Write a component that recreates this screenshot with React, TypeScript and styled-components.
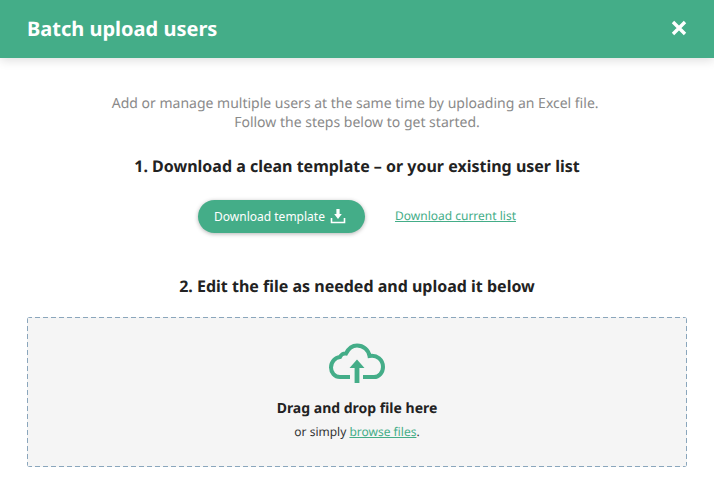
import styled, { createGlobalStyle } from 'styled-components';

const GlobalStyle = createGlobalStyle`
  html, body {
    margin: 0;
    padding: 0;
    background: #fff;
    font-family: "Noto Sans", sans-serif;
    text-rendering: geometricPrecision;
  }
`;

const Page = styled.div`
  width: 714px;
  height: 494px;
  overflow: hidden;
  background: #fff;
`;

const Header = styled.header`
  height: 58px;
  padding: 0 27px 2px;
  box-sizing: border-box;
  display: flex;
  align-items: center;
  justify-content: space-between;
  background: #44ad88;
  box-shadow: 0 2px 10px rgba(0, 0, 0, 0.14);
`;

const Title = styled.h1`
  margin: 0;
  font-size: 20px;
  line-height: 27px;
  font-weight: 700;
  color: #fff;
`;

const CloseButton = styled.button`
  display: flex;
  padding: 0;
  border: 0;
  background: none;
`;

const Body = styled.main`
  padding: 36px 27px 0;
  display: flex;
  flex-direction: column;
  align-items: center;
`;

const Intro = styled.p`
  margin: 0;
  font-size: 14px;
  line-height: 19px;
  text-align: center;
  color: #8a8a8a;
`;

const StepTitle = styled.h2<{ $top: number }>`
  margin: ${(p) => p.$top}px 0 0;
  font-size: 16px;
  line-height: 22px;
  font-weight: 700;
  color: #222;
`;

const Actions = styled.div`
  margin-top: 23px;
  display: flex;
  align-items: center;
  gap: 30px;
`;

const PrimaryButton = styled.button`
  width: 167px;
  height: 33px;
  padding: 0 3px 0 0;
  border: 0;
  border-radius: 17px;
  display: flex;
  align-items: center;
  justify-content: center;
  gap: 5px;
  background: #44ad88;
  box-shadow: 0 1px 4px rgba(0, 0, 0, 0.3);
  color: #fff;
  font-family: inherit;
  font-size: 12px;
`;

const TextLink = styled.a`
  color: #44ad88;
  text-decoration: underline;
  cursor: pointer;
`;

const CurrentListLink = styled(TextLink)`
  font-size: 12px;
  line-height: 16px;
  margin-top: -1px;
`;

const DropZone = styled.section`
  margin-top: 20px;
  width: 660px;
  height: 150px;
  box-sizing: border-box;
  border-radius: 3px;
  background-color: #f5f5f5;
  background-image:
    repeating-linear-gradient(90deg, #8aa6bc 0 5px, transparent 5px 8px),
    repeating-linear-gradient(90deg, #8aa6bc 0 5px, transparent 5px 8px),
    repeating-linear-gradient(0deg, #8aa6bc 0 5px, transparent 5px 8px),
    repeating-linear-gradient(0deg, #8aa6bc 0 5px, transparent 5px 8px);
  background-size: 100% 1px, 100% 1px, 1px 100%, 1px 100%;
  background-position: 0 0, 0 100%, 0 0, 100% 0;
  background-repeat: no-repeat;
  display: flex;
  flex-direction: column;
  align-items: center;
  padding-top: 25px;
`;

const DropTitle = styled.div`
  margin-top: 15px;
  font-size: 14px;
  line-height: 19px;
  font-weight: 700;
  color: #222;
`;

const DropHint = styled.div`
  margin-top: 6px;
  font-size: 12px;
  line-height: 16px;
  color: #333;
`;

const CloseIcon = () => (
  <svg width="16" height="16" viewBox="0 0 16 16" aria-hidden="true">
    <path d="M2 2l12 12M14 2L2 14" stroke="#fff" strokeWidth="3.4" fill="none" />
  </svg>
);

const DownloadIcon = () => (
  <svg width="16" height="16" viewBox="0 0 16 16" aria-hidden="true">
    <path d="M6.400 0h3.200v5h2.200L8 10 4.200 5h2.200z" fill="#fff" />
    <path d="M1.500 9v4.500h13V9" stroke="#fff" strokeWidth="1.600" fill="none" />
  </svg>
);

const CloudIcon = () => (
  <svg width="58" height="42" viewBox="0 0 58 42" aria-hidden="true">
    <path
      d="M22 35H12C6.500 35 3 30.500 3 25.500C3 20 7 15.500 12 15C13 12.500 15.500 11 18 11.500C20.500 6.500 24 3.500 29 3.500C35.500 3.500 40.500 8 41.500 14C49 12.500 55 18 55 25C55 30.500 51 35 46 35H35"
      stroke="#44ad88"
      strokeWidth="4"
      fill="none"
    />
    <path d="M29 17.500L36.500 26H31.400V41H26.600V26H21.500z" fill="#44ad88" />
  </svg>
);

export default function App() {
  return (
    <Page>
      <GlobalStyle />
      <Header>
        <Title>Batch upload users</Title>
        <CloseButton aria-label="Close">
          <CloseIcon />
        </CloseButton>
      </Header>
      <Body>
        <Intro>
          Add or manage multiple users at the same time by uploading an Excel file.&nbsp;
          <br />
          Follow the steps below to get started.
        </Intro>
        <StepTitle $top={23}>1. Download a clean template – or your existing user list</StepTitle>
        <Actions>
          <PrimaryButton>
            Download template
            <DownloadIcon />
          </PrimaryButton>
          <CurrentListLink>Download current list</CurrentListLink>
        </Actions>
        <StepTitle $top={42}>2. Edit the file as needed and upload it below</StepTitle>
        <DropZone>
          <CloudIcon />
          <DropTitle>Drag and drop file here</DropTitle>
          <DropHint>
            or simply <TextLink>browse files</TextLink>.
          </DropHint>
        </DropZone>
      </Body>
    </Page>
  );
}
